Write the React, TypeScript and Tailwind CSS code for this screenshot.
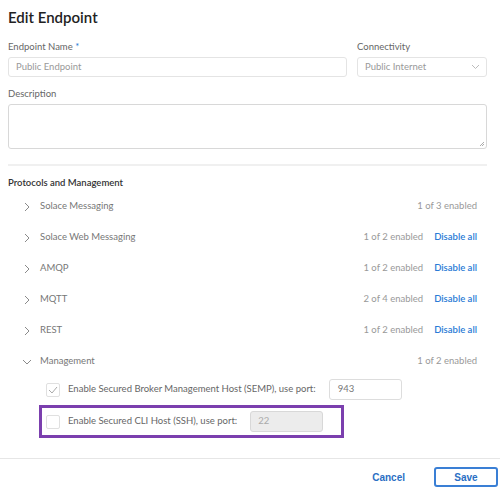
import React from 'react';

const protocols = [
  { name: 'Solace Messaging', count: '1 of 3 enabled', disable: false },
  { name: 'Solace Web Messaging', count: '1 of 2 enabled', disable: true },
  { name: 'AMQP', count: '1 of 2 enabled', disable: true },
  { name: 'MQTT', count: '2 of 4 enabled', disable: true },
  { name: 'REST', count: '1 of 2 enabled', disable: true },
];

const Chevron = ({ open }: { open?: boolean }) => (
  <svg width="10" height="10" viewBox="0 0 10 10" className="shrink-0">
    {open ? (
      <path d="M1 3l4 4 4-4" fill="none" stroke="#8a8a8a" strokeWidth="1" />
    ) : (
      <path d="M3 1l4 4-4 4" fill="none" stroke="#8a8a8a" strokeWidth="1" />
    )}
  </svg>
);

export default function App() {
  return (
    <div className="w-[500px] h-[497px] bg-white font-['Lato','Liberation_Sans',sans-serif] text-[#555] flex flex-col overflow-hidden">
      <div className="pl-2 pr-[13px]">
        {/* Header */}
        <h1 className="h-[34px] pt-[7px] text-[15px] font-semibold text-[#222] leading-[20px]">Edit Endpoint</h1>

        {/* Name + connectivity */}
        <div className="flex gap-[10px]">
          <div className="flex-1">
            <div className="h-[23px] text-[9.5px] leading-[12px] pt-[7px] text-[#666]">
              Endpoint Name <span className="text-[#2a7bd6]">*</span>
            </div>
            <div className="h-5 border border-[#e4e4e4] rounded-[3px] px-[7px] flex items-center text-[9.5px] text-[#999]">
              Public Endpoint
            </div>
          </div>
          <div className="w-[130px]">
            <div className="h-[23px] text-[9.5px] leading-[12px] pt-[7px] text-[#666]">Connectivity</div>
            <div className="h-5 border border-[#e4e4e4] rounded-[3px] pl-[7px] pr-[6px] flex items-center justify-between text-[9.5px] text-[#999]">
              <span>Public Internet</span>
              <svg width="9" height="6" viewBox="0 0 9 6">
                <path d="M1 1l3.5 3.5L8 1" fill="none" stroke="#bbb" strokeWidth="1" />
              </svg>
            </div>
          </div>
        </div>

        {/* Description */}
        <div className="h-[27px] text-[9.5px] leading-[12px] pt-[11px] text-[#666]">Description</div>
        <div className="relative h-[45px] border border-[#d8d8d8] rounded-[3px]">
          <svg width="6" height="6" viewBox="0 0 6 6" className="absolute right-[1px] bottom-[1px]">
            <path d="M5 1L1 5M5 3L3 5" stroke="#999" strokeWidth="0.8" />
          </svg>
        </div>

        <div className="mt-[15px] h-[2px] bg-[#f0f0f0]" />

        {/* Protocols */}
        <div className="h-[25px] pt-[11px] text-[9.5px] leading-[12px] font-semibold text-[#333]">Protocols and Management</div>
        <div className="pl-[14px] pr-[10px]">
          {protocols.map((p) => (
            <div key={p.name} className="h-[31px] flex items-center text-[9.5px]">
              <Chevron />
              <span className="ml-[8px] text-[#777]">{p.name}</span>
              <span className="ml-auto text-[#999]">{p.count}</span>
              {p.disable && <span className="ml-[11px] text-[#2a7bd6] font-semibold">Disable all</span>}
            </div>
          ))}
          <div className="h-[31px] flex items-center text-[9.5px]">
            <Chevron open />
            <span className="ml-[8px] text-[#777]">Management</span>
            <span className="ml-auto text-[#999]">1 of 2 enabled</span>
          </div>
        </div>

        {/* Management options */}
        <div className="pl-[31px]">
          <div className="h-[25px] flex items-center pl-[7px] text-[9.5px] text-[#666]">
            <div className="w-[14px] h-[14px] border border-[#e0e0e0] rounded-[2px] flex items-center justify-center">
              <svg width="10" height="8" viewBox="0 0 10 8">
                <path d="M1 4l3 3 5-6" fill="none" stroke="#aaa" strokeWidth="1" />
              </svg>
            </div>
            <span className="ml-2">Enable Secured Broker Management Host (SEMP), use port:</span>
            <div className="ml-[13px] w-[73px] h-[21px] border border-[#ddd] rounded-[3px] flex items-center px-[8px] text-[#777]">943</div>
          </div>
          <div className="mt-[3px] w-[305px] h-[33px] border-[3px] border-[#7b3fae] flex items-center pl-[4px] text-[9.5px] text-[#666]">
            <div className="w-[14px] h-[14px] border border-[#e0e0e0] rounded-[2px]" />
            <span className="ml-2">Enable Secured CLI Host (SSH), use port:</span>
            <div className="ml-[13px] w-[73px] h-[21px] border border-[#d8d8d8] bg-[#ececec] rounded-[3px] flex items-center px-[7px] text-[#aaa]">22</div>
          </div>
        </div>
      </div>

      {/* Footer */}
      <div className="mt-[20px] border-t border-[#e6e6e6] flex-1 flex items-center justify-end pr-[2px] pb-[2px] font-['Liberation_Sans',sans-serif]">
        <button className="text-[10px] font-bold text-[#2a6fc4] mr-[29px]">Cancel</button>
        <button className="w-[64px] h-[20px] border-2 border-[#3a7fd5] rounded-[3px] text-[10px] font-bold text-[#2a6fc4]">Save</button>
      </div>
    </div>
  );
}
